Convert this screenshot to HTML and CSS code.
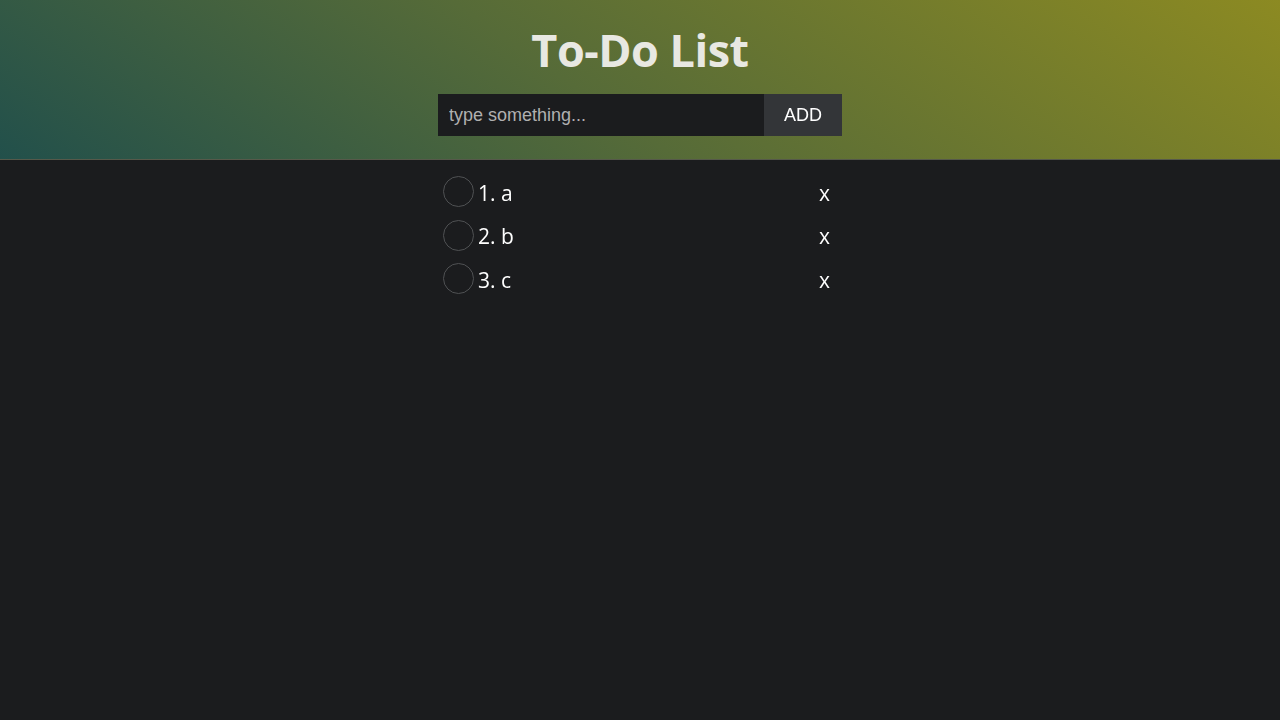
FILE: index.html
```html
<!DOCTYPE html>
<html lang="en">
<head>
<meta charset="utf-8">
<title>To-Do List</title>
<link rel="stylesheet" href="styles.css">
</head>
<body>
<header class="header">
  <h1 class="title">To-Do List</h1>
  <form class="add-form">
    <input class="add-input" type="text" placeholder="type something..." autofocus>
    <button class="add-btn" type="button">ADD</button>
  </form>
</header>
<main class="content">
  <ul class="todo-list">
    <li class="todo-item"><span class="check"></span><span class="todo-text">1. a</span><span class="remove">x</span></li>
    <li class="todo-item"><span class="check"></span><span class="todo-text">2. b</span><span class="remove">x</span></li>
    <li class="todo-item"><span class="check"></span><span class="todo-text">3. c</span><span class="remove">x</span></li>
  </ul>
</main>
</body>
</html>
```

FILE: styles.css
```css
* { box-sizing: border-box; }
html, body { margin: 0; padding: 0; }
body {
  background: #1b1c1e;
  color: #ffffff;
  font-family: "Open Sans", "Noto Sans", sans-serif;
  min-height: 720px;
}
.header {
  height: 160px;
  background: linear-gradient(35deg, #22504b 0%, #566b38 45%, #8c8a22 100%);
  border-bottom: 1px solid #56594a;
  display: flex;
  flex-direction: column;
  align-items: center;
  padding-top: 22px;
}
.title {
  margin: 0;
  font-size: 45px;
  font-weight: 700;
  line-height: 56px;
  color: #e8e8e2;
  letter-spacing: -0.5px;
}
.add-form {
  display: flex;
  margin-top: 16px;
  width: 404px;
  height: 42px;
}
.add-input {
  flex: 1;
  background: #1b1c1e;
  border: none;
  outline: none;
  color: #e0e0e0;
  font-family: "Liberation Sans", Arial, sans-serif;
  font-size: 18px;
  padding: 0 11px;
  caret-color: #ffffff;
}
.add-input::placeholder { color: #b0b0b0; }
.add-btn {
  width: 78px;
  background: #333538;
  border: none;
  color: #ffffff;
  font-family: "Liberation Sans", Arial, sans-serif;
  font-size: 18px;
}
.content {
  display: flex;
  justify-content: center;
  padding-top: 11px;
}
.todo-list {
  list-style: none;
  margin: 0;
  padding: 0;
  width: 404px;
}
.todo-item {
  display: flex;
  align-items: center;
  height: 43.5px;
  padding: 0 12px 0 5px;
}
.check {
  width: 31px;
  height: 31px;
  border: 1px solid #505254;
  border-radius: 50%;
  margin-top: -2px;
  margin-right: 4px;
  flex: none;
}
.todo-text {
  flex: 1;
  font-size: 21px;
  color: #ffffff;
}
.remove {
  font-size: 21px;
  color: #ffffff;
}
```
